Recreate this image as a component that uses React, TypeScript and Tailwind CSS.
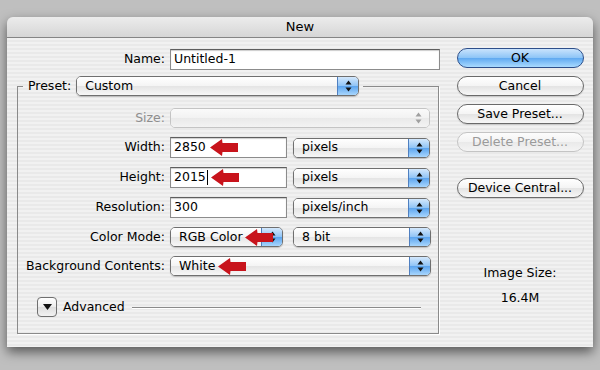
import React from "react";

const stripes =
  "bg-[repeating-linear-gradient(180deg,#f1f1f1_0px,#f1f1f1_2px,#e9e9e9_2px,#e9e9e9_4px)]";

function Updown({ muted }: { muted?: boolean }) {
  const c = muted ? "#a0a0a0" : "#111";
  return (
    <svg width="7" height="12" viewBox="0 0 7 12">
      <path d="M3.5 0.5 L6.5 4.5 L0.5 4.5 Z" fill={c} />
      <path d="M3.5 11.5 L6.5 7.5 L0.5 7.5 Z" fill={c} />
    </svg>
  );
}

function Popup({ value, w, disabled }: { value?: string; w: string; disabled?: boolean }) {
  return (
    <div
      className={`flex h-[20px] ${w} overflow-hidden rounded-[5px] border ${
        disabled ? "border-[#c4c4c4]" : "border-[#6f6f6f] shadow-[0_1px_1px_rgba(0,0,0,0.2)]"
      }`}
    >
      <div
        className={`flex flex-1 items-center pl-[8px] ${
          disabled
            ? "bg-[linear-gradient(#fafafa,#f2f2f2_50%,#e9e9e9_50%,#f3f3f3)]"
            : "bg-[linear-gradient(#ffffff,#f4f4f4_50%,#e4e4e4_50%,#f7f7f7)]"
        }`}
      >
        {value}
      </div>
      <div
        className={`flex w-[21px] items-center justify-center ${
          disabled
            ? "bg-[linear-gradient(#fafafa,#f2f2f2_50%,#e9e9e9_50%,#f3f3f3)]"
            : "border-l border-[#4f7fc0] bg-[linear-gradient(#d4e8fc,#8ec3f6_50%,#5aa3ee_50%,#a8d6fd)]"
        }`}
      >
        <Updown muted={disabled} />
      </div>
    </div>
  );
}

function Field({ value, w, cursor }: { value: string; w: string; cursor?: boolean }) {
  return (
    <div
      className={`flex h-[21px] ${w} items-center border border-[#8c8c8c] border-t-[#5e5e5e] bg-white pl-[3px] shadow-[inset_0_1px_1px_rgba(0,0,0,0.2)]`}
    >
      {value}
      {cursor && <span className="ml-[1px] h-[15px] w-[1px] bg-black" />}
    </div>
  );
}

function RedArrow({ className }: { className: string }) {
  return (
    <svg className={`absolute ${className}`} width="28" height="17" viewBox="0 0 28 17">
      <path d="M0 8.5 L12 0 L12.5 4 L28 4 L28 13 L12.5 13 L12 17 Z" fill="#c8141c" />
    </svg>
  );
}

function Button({ label, primary, disabled }: { label: string; primary?: boolean; disabled?: boolean }) {
  return (
    <div
      className={`flex h-[20px] w-[127px] items-center justify-center rounded-full border ${
        primary
          ? "border-[#2e4f8a] bg-[linear-gradient(#c9e3fc,#8cc4f7_50%,#5ea8f0_50%,#a9daff)]"
          : disabled
          ? "border-[#c4c4c4] bg-[linear-gradient(#fcfcfc,#f3f3f3_50%,#e9e9e9_50%,#f4f4f4)] text-[#9a9a9a]"
          : "border-[#6a6a6a] bg-[linear-gradient(#ffffff,#f4f4f4_50%,#e3e3e3_50%,#f7f7f7)] shadow-[0_1px_1px_rgba(0,0,0,0.15)]"
      }`}
    >
      {label}
    </div>
  );
}

const rowLabel = "w-[152px] pr-[5px] text-right";

export default function App() {
  return (
    <div className="h-[370px] w-[600px] bg-[#bfbfbf] pl-[7px] pt-[17px] font-['DejaVu_Sans',sans-serif] text-[12.5px] text-black">
      <div className="flex h-[330px] w-[586px] flex-col overflow-hidden rounded-t-[6px] shadow-[0_5px_12px_rgba(0,0,0,0.55)]">
        {/* Title bar */}
        <div className="flex h-[21px] shrink-0 items-center justify-center border-b border-[#858585] bg-[linear-gradient(#ececec,#d6d6d6)] text-[13px]">
          New
        </div>

        <div className={`flex flex-1 ${stripes}`}>
          {/* Left form */}
          <div className="w-[440px] pt-[11px]">
            <div className="flex items-center">
              <div className="w-[163px] pr-[5px] text-right">Name:</div>
              <Field value="Untitled-1" w="w-[270px]" />
            </div>

            <fieldset className="ml-[10px] mt-[6px] w-[422px] border border-[#8a8a8a] pb-[16px] pt-[12px] shadow-[1px_1px_0_#fff]">
              <legend className="ml-[5px] flex items-center px-[5px] pr-[4px]">
                <span className="pr-[5px]">Preset:</span>
                <Popup value="Custom" w="w-[283px]" />
              </legend>

              <div className="flex flex-col gap-[9px]">
                <div className="flex items-center">
                  <div className={`${rowLabel} text-[#8e8e8e]`}>Size:</div>
                  <Popup w="w-[260px]" disabled />
                </div>
                <div className="relative flex items-center">
                  <div className={rowLabel}>Width:</div>
                  <Field value="2850" w="w-[117px]" />
                  <Popup value="pixels" w="ml-[6px] w-[137px]" />
                  <RedArrow className="left-[192px] top-[2px]" />
                </div>
                <div className="relative flex items-center">
                  <div className={rowLabel}>Height:</div>
                  <Field value="2015" w="w-[117px]" cursor />
                  <Popup value="pixels" w="ml-[6px] w-[137px]" />
                  <RedArrow className="left-[193px] top-[2px]" />
                </div>
                <div className="flex items-center">
                  <div className={rowLabel}>Resolution:</div>
                  <Field value="300" w="w-[117px]" />
                  <Popup value="pixels/inch" w="ml-[6px] w-[137px]" />
                </div>
                <div className="relative flex items-center">
                  <div className={rowLabel}>Color Mode:</div>
                  <Popup value="RGB Color" w="w-[113px]" />
                  <Popup value="8 bit" w="ml-[10px] w-[138px]" />
                  <RedArrow className="left-[227px] top-[2px]" />
                </div>
                <div className="relative flex items-center">
                  <div className={rowLabel}>Background Contents:</div>
                  <Popup value="White" w="w-[261px]" />
                  <RedArrow className="left-[200px] top-[2px]" />
                </div>
              </div>

              <div className="mt-[21px] flex items-center pl-[19px] pr-[17px]">
                <div className="flex h-[20px] w-[20px] items-center justify-center rounded-[4px] border border-[#6f6f6f] bg-[linear-gradient(#ffffff,#ececec_50%,#dddddd_50%,#f2f2f2)]">
                  <svg width="9" height="6" viewBox="0 0 9 6">
                    <path d="M0 0 L9 0 L4.5 6 Z" fill="#111" />
                  </svg>
                </div>
                <span className="ml-[6px]">Advanced</span>
                <div className="ml-[7px] h-[1px] flex-1 bg-[#8a8a8a] shadow-[0_1px_0_#fff]" />
              </div>
            </fieldset>
          </div>

          {/* Right buttons */}
          <div className="flex flex-1 flex-col items-center pt-[10px]">
            <div className="flex flex-col gap-[8px]">
              <Button label="OK" primary />
              <Button label="Cancel" />
              <Button label="Save Preset..." />
              <Button label="Delete Preset..." disabled />
            </div>
            <div className="mt-[26px]">
              <Button label="Device Central..." />
            </div>
            <div className="mt-[62px] text-center leading-[25px]">
              <div>Image Size:</div>
              <div>16.4M</div>
            </div>
          </div>
        </div>
      </div>
    </div>
  );
}
